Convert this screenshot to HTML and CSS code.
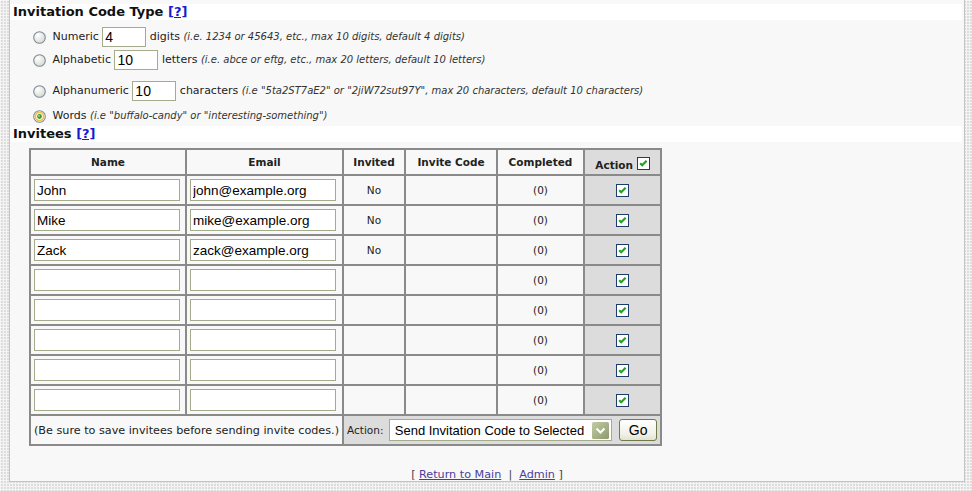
FILE: index.html
```html
<!DOCTYPE html>
<html>
<head>
<meta charset="utf-8">
<title>Invitation Codes</title>
<link rel="stylesheet" href="styles.css">
</head>
<body>
<div class="page">
  <div class="panel">
    <h2 class="band">Invitation Code Type <a href="#" class="help">[?]</a></h2>
    <div class="options">
      <div class="opt o1">
        <svg class="radio" viewBox="0 0 13 13"><defs><radialGradient id="rg" cx="0.35" cy="0.3" r="0.8"><stop offset="0" stop-color="#ffffff"/><stop offset="1" stop-color="#d6d6ce"/></radialGradient></defs><circle cx="6.5" cy="6.5" r="5.8" fill="url(#rg)" stroke="#7e8c99" stroke-width="1.1"/></svg>
        <span class="lbl">Numeric</span> <input class="code" type="text" value="4"> <span class="lbl">digits</span> <i>(i.e. 1234 or 45643, etc., max 10 digits, default 4 digits)</i>
      </div>
      <div class="opt o2">
        <svg class="radio" viewBox="0 0 13 13"><circle cx="6.5" cy="6.5" r="5.8" fill="url(#rg)" stroke="#7e8c99" stroke-width="1.1"/></svg>
        <span class="lbl">Alphabetic</span> <input class="code" type="text" value="10"> <span class="lbl">letters</span> <i>(i.e. abce or eftg, etc., max 20 letters, default 10 letters)</i>
      </div>
      <div class="opt o3">
        <svg class="radio" viewBox="0 0 13 13"><circle cx="6.5" cy="6.5" r="5.8" fill="url(#rg)" stroke="#7e8c99" stroke-width="1.1"/></svg>
        <span class="lbl">Alphanumeric</span> <input class="code" type="text" value="10"> <span class="lbl">characters</span> <i>(i.e "5ta2ST7aE2" or "2jiW72sut97Y", max 20 characters, default 10 characters)</i>
      </div>
      <div class="opt o4">
        <svg class="radio" viewBox="0 0 13 13"><circle cx="6.5" cy="6.5" r="5.8" fill="#fff" stroke="#7e8c99" stroke-width="1.1"/><circle cx="6.5" cy="6.5" r="4.2" fill="none" stroke="#f2c04e" stroke-width="1.8"/><circle cx="6.5" cy="6.5" r="2.4" fill="#3b9a2e"/><circle cx="6" cy="6" r="0.9" fill="#9fe08a"/></svg>
        <span class="lbl">Words</span> <i>(i.e "buffalo-candy" or "interesting-something")</i>
      </div>
    </div>

    <h2 class="band">Invitees <a href="#" class="help">[?]</a></h2>

    <table class="invitees">
      <thead>
        <tr>
          <th class="c-name">Name</th>
          <th class="c-email">Email</th>
          <th class="c-inv">Invited</th>
          <th class="c-code">Invite Code</th>
          <th class="c-comp">Completed</th>
          <th class="c-act act">Action <svg class="cb" viewBox="0 0 13 13"><rect x="0.5" y="0.5" width="12" height="12" fill="#fff" stroke="#1d3c6a"/><path d="M3.2 6.2 L5.2 8.2 L9.6 3.8" fill="none" stroke="#21a121" stroke-width="2.2"/></svg></th>
        </tr>
      </thead>
      <tbody>
        <tr><td><input class="cell-in" type="text" value="John"></td><td><input class="cell-in" type="text" value="john@example.org"></td><td class="ctr">No</td><td></td><td class="ctr">(0)</td><td class="act ctr"><svg class="cb" viewBox="0 0 13 13"><rect x="0.5" y="0.5" width="12" height="12" fill="#fff" stroke="#1d3c6a"/><path d="M3.2 6.2 L5.2 8.2 L9.6 3.8" fill="none" stroke="#21a121" stroke-width="2.2"/></svg></td></tr>
        <tr><td><input class="cell-in" type="text" value="Mike"></td><td><input class="cell-in" type="text" value="mike@example.org"></td><td class="ctr">No</td><td></td><td class="ctr">(0)</td><td class="act ctr"><svg class="cb" viewBox="0 0 13 13"><rect x="0.5" y="0.5" width="12" height="12" fill="#fff" stroke="#1d3c6a"/><path d="M3.2 6.2 L5.2 8.2 L9.6 3.8" fill="none" stroke="#21a121" stroke-width="2.2"/></svg></td></tr>
        <tr><td><input class="cell-in" type="text" value="Zack"></td><td><input class="cell-in" type="text" value="zack@example.org"></td><td class="ctr">No</td><td></td><td class="ctr">(0)</td><td class="act ctr"><svg class="cb" viewBox="0 0 13 13"><rect x="0.5" y="0.5" width="12" height="12" fill="#fff" stroke="#1d3c6a"/><path d="M3.2 6.2 L5.2 8.2 L9.6 3.8" fill="none" stroke="#21a121" stroke-width="2.2"/></svg></td></tr>
        <tr><td><input class="cell-in" type="text" value=""></td><td><input class="cell-in" type="text" value=""></td><td></td><td></td><td class="ctr">(0)</td><td class="act ctr"><svg class="cb" viewBox="0 0 13 13"><rect x="0.5" y="0.5" width="12" height="12" fill="#fff" stroke="#1d3c6a"/><path d="M3.2 6.2 L5.2 8.2 L9.6 3.8" fill="none" stroke="#21a121" stroke-width="2.2"/></svg></td></tr>
        <tr><td><input class="cell-in" type="text" value=""></td><td><input class="cell-in" type="text" value=""></td><td></td><td></td><td class="ctr">(0)</td><td class="act ctr"><svg class="cb" viewBox="0 0 13 13"><rect x="0.5" y="0.5" width="12" height="12" fill="#fff" stroke="#1d3c6a"/><path d="M3.2 6.2 L5.2 8.2 L9.6 3.8" fill="none" stroke="#21a121" stroke-width="2.2"/></svg></td></tr>
        <tr><td><input class="cell-in" type="text" value=""></td><td><input class="cell-in" type="text" value=""></td><td></td><td></td><td class="ctr">(0)</td><td class="act ctr"><svg class="cb" viewBox="0 0 13 13"><rect x="0.5" y="0.5" width="12" height="12" fill="#fff" stroke="#1d3c6a"/><path d="M3.2 6.2 L5.2 8.2 L9.6 3.8" fill="none" stroke="#21a121" stroke-width="2.2"/></svg></td></tr>
        <tr><td><input class="cell-in" type="text" value=""></td><td><input class="cell-in" type="text" value=""></td><td></td><td></td><td class="ctr">(0)</td><td class="act ctr"><svg class="cb" viewBox="0 0 13 13"><rect x="0.5" y="0.5" width="12" height="12" fill="#fff" stroke="#1d3c6a"/><path d="M3.2 6.2 L5.2 8.2 L9.6 3.8" fill="none" stroke="#21a121" stroke-width="2.2"/></svg></td></tr>
        <tr><td><input class="cell-in" type="text" value=""></td><td><input class="cell-in" type="text" value=""></td><td></td><td></td><td class="ctr">(0)</td><td class="act ctr"><svg class="cb" viewBox="0 0 13 13"><rect x="0.5" y="0.5" width="12" height="12" fill="#fff" stroke="#1d3c6a"/><path d="M3.2 6.2 L5.2 8.2 L9.6 3.8" fill="none" stroke="#21a121" stroke-width="2.2"/></svg></td></tr>
        <tr class="foot">
          <td colspan="2" class="note">(Be sure to save invitees before sending invite codes.)</td>
          <td colspan="4" class="act actions">
            <span class="lbl">Action:</span>
            <span class="select"><span class="sel-text">Send Invitation Code to Selected</span><svg class="sel-arrow" viewBox="0 0 17 17"><defs><linearGradient id="ag" x1="0" y1="0" x2="1" y2="1"><stop offset="0" stop-color="#c3cca6"/><stop offset="1" stop-color="#8d9a6c"/></linearGradient></defs><rect x="0" y="0" width="17" height="17" rx="1.5" fill="url(#ag)"/><path d="M4.5 6.5 L8.5 10.5 L12.5 6.5" fill="none" stroke="#fff" stroke-width="2"/></svg></span>
            <button class="go" type="button">Go</button>
          </td>
        </tr>
      </tbody>
    </table>

    <div class="links">[ <a href="#">Return to Main</a> &nbsp;|&nbsp; <a href="#">Admin</a> ]</div>
  </div>
</div>
</body>
</html>
```

FILE: styles.css
```css
html, body {
  margin: 0;
  padding: 0;
}
body {
  background-color: #dcdcdc;
  background-image:
    linear-gradient(90deg, #f4f4f4 1px, transparent 1px),
    linear-gradient(#f4f4f4 1px, transparent 1px);
  background-size: 3px 3px;
  font-family: "DejaVu Sans", Verdana, sans-serif;
  font-size: 11px;
  color: #222;
}
.page {
  padding: 0 7px 9px 9px;
}
.panel {
  height: 482px;
  box-sizing: border-box;
  background: #f8f8f8;
  border: 1px solid #c4c4c4;
  border-top: none;
  padding-top: 4px;
}
.band {
  margin: 0 2px 0 0;
  height: 16px;
  line-height: 16px;
  background: #ffffff;
  padding-left: 3px;
  font-size: 13px;
  font-weight: bold;
  color: #111;
}
.help {
  color: #1a1acc;
  text-decoration: underline;
}
.options {
  padding-left: 23px;
  height: 106px;
}
.opt {
  height: 20px;
  line-height: 20px;
  white-space: nowrap;
  color: #222;
}
.o1 { padding-top: 7px; }
.o2 { margin-top: 3px; }
.o3 { margin-top: 11px; }
.o4 { margin-top: 5px; }
.opt > * { vertical-align: middle; }
.radio {
  width: 13px;
  height: 13px;
  margin-right: 3px;
}
.opt i {
  font-size: 10px;
  color: #333;
}
.code {
  width: 44px;
  height: 20px;
  box-sizing: border-box;
  border: 1px solid #a4ac8c;
  padding: 0 2px;
  font-family: "Liberation Sans", Arial, sans-serif;
  font-size: 14px;
  color: #000;
  background: #fff;
  margin: 0;
}
.invitees {
  margin: 6px 0 0 19px;
  border-collapse: separate;
  border-spacing: 0;
  border: 1px solid #8a8a8a;
  table-layout: fixed;
  width: 633px;
}
.invitees th,
.invitees td {
  border: 1px solid #8a8a8a;
  box-sizing: border-box;
  padding: 0 3px;
}
.invitees th {
  height: 26px;
  font-size: 10.5px;
  font-weight: bold;
  color: #222;
  text-align: center;
}
.invitees td {
  height: 30px;
  font-size: 10.5px;
  color: #222;
}
.c-name { width: 156px; }
.c-email { width: 157px; }
.c-inv { width: 62px; }
.c-code { width: 92px; }
.c-comp { width: 87px; }
.c-act { width: 77px; }
.act { background: #dcdcdc; }
th.act { vertical-align: bottom; padding-bottom: 3px; }
.ctr { text-align: center; }
.cb {
  width: 13px;
  height: 13px;
  vertical-align: middle;
}
th .cb { vertical-align: -1px; }
.cell-in {
  display: block;
  width: 146px;
  height: 22px;
  box-sizing: border-box;
  margin: 0;
  border: 1px solid #a4ac8c;
  padding: 0 2px;
  background: #fff;
  font-family: "Liberation Sans", Arial, sans-serif;
  font-size: 13.5px;
  color: #000;
}
.invitees td.note {
  font-size: 11.2px;
  white-space: nowrap;
}
.actions {
  white-space: nowrap;
}
.actions > * { vertical-align: middle; }
.actions .lbl { font-size: 10.5px; margin-right: 2px; }
.select {
  display: inline-flex;
  align-items: center;
  justify-content: space-between;
  width: 223px;
  height: 22px;
  box-sizing: border-box;
  border: 1px solid #a4ac8c;
  background: #fff;
  padding: 0 2px 0 5px;
  font-family: "Liberation Sans", Arial, sans-serif;
  font-size: 13px;
  color: #000;
}
.sel-arrow {
  width: 17px;
  height: 17px;
}
.go {
  width: 38px;
  height: 22px;
  margin-left: 4px;
  border: 1px solid #6e7c4a;
  border-radius: 3px;
  background: linear-gradient(#ffffff, #f1f1e6 70%, #e2e2d2);
  font-family: "Liberation Sans", Arial, sans-serif;
  font-size: 14px;
  color: #000;
  padding: 0;
}
.links {
  margin-top: 22px;
  text-align: center;
  font-size: 11.2px;
  color: #444;
  line-height: 14px;
}
.links a {
  color: #4a3d9a;
  text-decoration: underline;
}
```
